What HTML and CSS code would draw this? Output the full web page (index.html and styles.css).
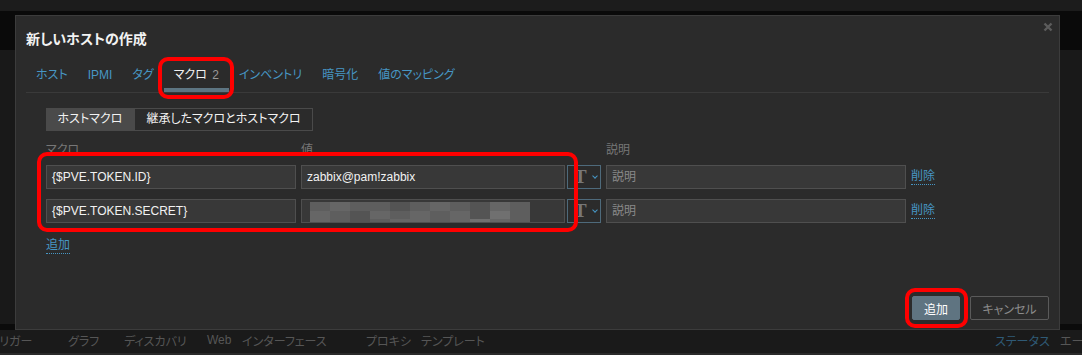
FILE: index.html
```html
<!DOCTYPE html>
<html lang="ja">
<head>
  <meta charset="UTF-8" />
  <meta name="viewport" content="width=device-width, initial-scale=1.0"/>
  <title>新しいホストの作成</title>
  <link rel="stylesheet" href="styles.css">
</head>
<body>

  <div class="page">
    <div class="page-top"></div>
    <div class="page-band"></div>
    <div class="page-main"></div>
    <div class="page-nav">
      <span class="nav-item first">トリガー</span>
      <span class="nav-item">グラフ</span>
      <span class="nav-item">ディスカバリ</span>
      <span class="nav-item">Web</span>
      <span class="nav-item">インターフェース</span>
      <span class="nav-item">プロキシ</span>
      <span class="nav-item">テンプレート</span>
      <span></span>
      <span class="nav-item blue">ステータス</span>
      <span class="nav-item">エージ</span>
    </div>
  </div>

  <div class="dialog">
    <div class="dialog-head">
      <h4>新しいホストの作成</h4>
      <svg class="close" width="10" height="10" viewBox="0 0 10 10">
        <path d="M1.5 1.5 L8.5 8.5 M8.5 1.5 L1.5 8.5" stroke="#5c5c5c" stroke-width="2.4"/>
      </svg>
    </div>

    <ul class="tabs">
      <li>ホスト</li>
      <li>IPMI</li>
      <li>タグ</li>
      <li class="active">マクロ <span class="count">2</span></li>
      <li>インベントリ</li>
      <li>暗号化</li>
      <li>値のマッピング</li>
    </ul>

    <div class="tab-body">
      <div class="segmented">
        <span class="seg on">ホストマクロ</span>
        <span class="seg">継承したマクロとホストマクロ</span>
      </div>

      <div class="macro-grid">
        <div class="col-head">マクロ</div>
        <div class="col-head">値</div>
        <div class="col-head"></div>
        <div class="col-head">説明</div>
        <div class="col-head"></div>

        <div class="field">{$PVE.TOKEN.ID}</div>
        <div class="field value">zabbix@pam!zabbix</div>
        <div class="type-btn"><span class="tee">T</span><span class="chev"></span></div>
        <div class="field placeholder">説明</div>
        <a class="link remove">削除</a>

        <div class="field">{$PVE.TOKEN.SECRET}</div>
        <div class="field value">
          <div class="mosaic">
            <i class="m2"></i><i class="m3"></i><i class="m2"></i><i class="m2"></i><i class="m1"></i><i class="m2"></i><i class="m3"></i><i class="m2"></i><i class="m1"></i><i class="m3"></i><i class="m2"></i>
            <i class="m3"></i><i class="m2"></i><i class="m1"></i><i class="m3"></i><i class="m2"></i><i class="m3"></i><i class="m2"></i><i class="m3"></i><i class="m1"></i><i class="m4"></i><i class="m2"></i>
            <i class="m3"></i><i class="m2"></i><i class="m1"></i><i class="m2"></i><i class="m3"></i><i class="m3"></i><i class="m2"></i><i class="m3"></i><i class="m4"></i><i class="m3"></i><i class="m2"></i>
            <i class="m2"></i><i class="m3"></i><i class="m4"></i><i class="m2"></i><i class="m3"></i><i class="m3"></i><i class="m2"></i><i class="m2"></i><i class="m3"></i><i class="m3"></i><i class="m1"></i>
          </div>
        </div>
        <div class="type-btn"><span class="tee">T</span><span class="chev"></span></div>
        <div class="field placeholder">説明</div>
        <a class="link remove">削除</a>
      </div>

      <a class="link add">追加</a>
    </div>

    <div class="dialog-foot">
      <button class="btn primary">追加</button>
      <button class="btn alt">キャンセル</button>
    </div>
  </div>

  <div class="mark mark-tab"></div>
  <div class="mark mark-rows"></div>
  <div class="mark mark-btn"></div>

</body>
</html>
```

FILE: styles.css
```css
* {
  box-sizing: border-box;
}

body {
  margin: 0;
  background: #191919;
  font-family: "Liberation Sans", "Noto Sans CJK JP", sans-serif;
  font-size: 12px;
  font-feature-settings: "palt";
  color: #f2f2f2;
  overflow: hidden;
}

.page {
  display: flex;
  flex-direction: column;
  height: 355px;
}

.page-top {
  height: 11px;
  background: #1c1c1c;
}

.page-band {
  height: 39px;
  background: #0a0a0a;
}

.page-main {
  flex: 1;
  background: #191919;
  border-bottom: 6px solid #0b0b0b;
}

.page-nav {
  height: 25px;
  padding-bottom: 3px;
  background: #1a1a1a;
  border-bottom: 2px solid #2a2a2a;
  display: grid;
  grid-template-columns: 78px 56px 83px 35px 124px 55px 64px 1fr 65px 60px;
  align-items: center;
  margin-left: -10px;
  width: 1130px;
  color: #565656;
  white-space: nowrap;
}

.nav-item.blue {
  color: #2f5a76;
}

/* dialog over the page */
.dialog {
  position: absolute;
  left: 15px;
  top: 15px;
  width: 1045px;
  height: 315px;
  background: #2b2b2b;
  border: 1px solid #3c3c3c;
  padding: 0 10px 9px;
  display: flex;
  flex-direction: column;
}

.dialog-head {
  height: 44px;
  display: flex;
  align-items: center;
  justify-content: space-between;
}

.dialog-head h4 {
  margin: 0;
  font-size: 14px;
  font-weight: bold;
  color: #f2f2f2;
}

.close {
  margin: -22px -4px 0 0;
}

.tabs {
  list-style: none;
  margin: 0;
  padding: 0;
  height: 33px;
  display: flex;
  border-bottom: 1px solid #3a3a3a;
}

.tabs li {
  padding: 0 10px;
  height: 32px;
  line-height: 30px;
  color: #4796c4;
}

.tabs li.active {
  color: #f2f2f2;
  border-bottom: 4px solid #5d7582;
}

.tabs .count {
  color: #999;
  margin-left: 2px;
}

.tab-body {
  padding: 15px 0 0 20px;
}

.segmented {
  display: inline-flex;
  height: 23px;
}

.seg {
  padding: 0 10px;
  line-height: 21px;
  border: 1px solid #4a4a4a;
  color: #f2f2f2;
}

.seg:last-child {
  width: 179px;
  text-align: center;
}

.seg.on {
  background: #4a4a4a;
  width: 88px;
  text-align: center;
}

.macro-grid {
  display: grid;
  grid-template-columns: 250px 261px 34px 300px auto;
  column-gap: 5px;
  row-gap: 10px;
  margin-top: 12px;
  align-items: center;
}

.col-head {
  color: #777;
  line-height: 14px;
  margin-bottom: -2px;
}

.field {
  height: 24px;
  background: #383838;
  border: 1px solid #4f4f4f;
  padding: 0 5px;
  line-height: 22px;
  color: #f2f2f2;
  white-space: nowrap;
  overflow: hidden;
}

.field.value {
  margin-right: -3px;
}

.field.placeholder {
  color: #8a8a8a;
}

.type-btn {
  height: 24px;
  border: 1px solid #4e6a7b;
  display: flex;
  align-items: center;
  padding-left: 6px;
  gap: 4px;
}

.tee {
  font-family: "Liberation Serif", serif;
  font-size: 19px;
  font-weight: bold;
  color: #777;
  line-height: 20px;
}

.chev {
  width: 4px;
  height: 4px;
  border-right: 1px solid #4796c4;
  border-bottom: 1px solid #4796c4;
  transform: rotate(45deg);
  margin: -2px 0 0 2px;
}

.link {
  color: #4796c4;
  border-bottom: 1px dotted #4796c4;
  line-height: 15px;
  cursor: pointer;
}

.remove {
  justify-self: start;
}

.add {
  display: inline-block;
  margin-top: 15px;
}

.mosaic {
  display: grid;
  grid-template-columns: repeat(11, 20px);
  grid-auto-rows: 8.5px;
  margin: 2px 0 0 3px;
  width: 220px;
}

.mosaic i {
  display: block;
}

.m1 { background: #545454; }
.m2 { background: #5e5e5e; }
.m3 { background: #666; }
.m4 { background: #707070; }

.dialog-foot {
  margin-top: auto;
  display: flex;
  justify-content: flex-end;
  gap: 10px;
}

.btn {
  height: 24px;
  font: inherit;
  padding: 0 11px;
  border-radius: 2px;
}

.btn.primary {
  width: 48px;
  background: #5f7481;
  border: 1px solid #5f7481;
  color: #fff;
}

.btn.alt {
  width: 79px;
  background: transparent;
  border: 1px solid #5a5a5a;
  color: #8c8c8c;
}

/* red annotation outlines */
.mark {
  position: absolute;
  border: 4px solid #f00;
  border-radius: 10px;
}

.mark-tab {
  left: 158px;
  top: 57px;
  width: 76px;
  height: 42px;
}

.mark-rows {
  left: 37px;
  top: 152px;
  width: 541px;
  height: 80px;
}

.mark-btn {
  left: 905px;
  top: 288px;
  width: 63px;
  height: 40px;
}
```
